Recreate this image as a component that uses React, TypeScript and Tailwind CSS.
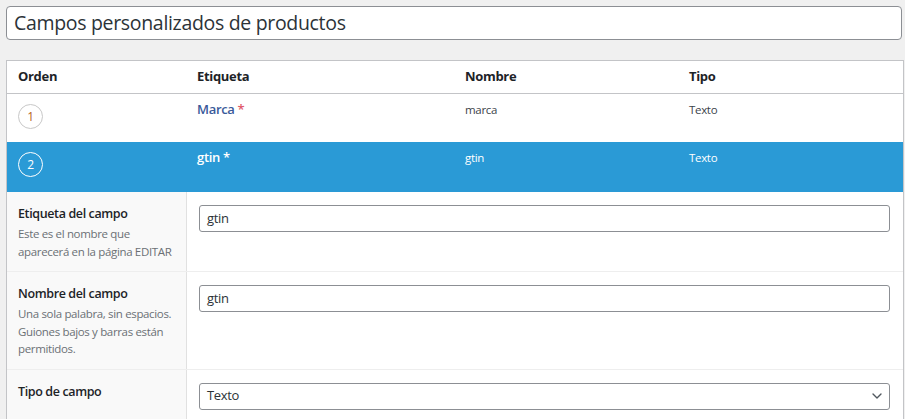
import { ChevronDown } from 'lucide-react';

interface Campo {
    orden: number;
    etiqueta: string;
    nombre: string;
    tipo: string;
}

const campos: Campo[] = [
    { orden: 1, etiqueta: 'Marca', nombre: 'marca', tipo: 'Texto' },
    { orden: 2, etiqueta: 'gtin', nombre: 'gtin', tipo: 'Texto' },
];

const FieldRow = ({
    label,
    desc,
    children,
    last,
}: {
    label: string;
    desc?: string[];
    children: React.ReactNode;
    last?: boolean;
}) => (
    <div className={`flex ${last ? 'min-h-[56px]' : 'border-b border-[#eeeeee]'}`}>
        <div className="w-[180px] shrink-0 border-r border-[#e1e1e1] bg-[#f9f9f9] px-[11px] pt-[13px] pb-[11px]">
            <p className="text-[12.5px] font-semibold leading-[18px] tracking-[-0.03em] text-[#1d2327]">
                {label}
            </p>
            {desc && (
                <div className="mt-[2px] text-[11.5px] leading-[17.5px] tracking-[-0.03em] whitespace-nowrap text-[#6b7075]">
                    {desc.map((d) => (
                        <p key={d}>{d}</p>
                    ))}
                </div>
            )}
        </div>
        <div className="flex-1 pt-[13px] pr-[13px] pl-[12px]">{children}</div>
    </div>
);

export default function App() {
    return (
        <div className="bg-[#f0f0f0] pt-[6px] pr-[1px] pl-[6px] font-['Open_Sans',sans-serif] tracking-[-0.02em]">
            <div className="mr-[2px] flex h-[34px] items-center rounded-[4px] border border-[#8c8f94] bg-white px-[7px] text-[19.5px] text-[#2c3338]">
                Campos personalizados de productos
            </div>

            <div className="mt-[20px] border border-[#c3c4c7] bg-white">
                {/* cabecera */}
                <div className="flex h-[33px] items-center border-b border-[#c3c4c7] text-[13px] font-bold text-[#1d2327]">
                    <div className="w-[190px] pl-[11px]">Orden</div>
                    <div className="w-[268px]">Etiqueta</div>
                    <div className="w-[224px]">Nombre</div>
                    <div>Tipo</div>
                </div>

                {campos.map((c) => {
                    const activo = c.orden === 2;
                    return (
                        <div
                            key={c.orden}
                            className={`flex h-[48px] ${activo ? 'bg-[#2a9ad6] text-white' : 'bg-white'}`}
                        >
                            <div className="w-[190px] pt-[10px] pl-[11px]">
                                <span
                                    className={`flex h-[25px] w-[25px] items-center justify-center rounded-full border text-[12px] ${
                                        activo
                                            ? 'border-white text-white'
                                            : 'border-[#c8c8c8] text-[#b5651d]'
                                    }`}
                                >
                                    {c.orden}
                                </span>
                            </div>
                            <div className="w-[268px] pt-[6px] text-[13px] font-semibold">
                                <span className={activo ? 'text-white' : 'text-[#3a5a9a]'}>
                                    {c.etiqueta}
                                </span>{' '}
                                <span className={activo ? 'text-white' : 'text-[#e05a6a]'}>
                                    *
                                </span>
                            </div>
                            <div
                                className={`w-[224px] pt-[7px] text-[11.5px] ${activo ? 'text-white' : 'text-[#3c434a]'}`}
                            >
                                {c.nombre}
                            </div>
                            <div
                                className={`pt-[7px] text-[11.5px] ${activo ? 'text-white' : 'text-[#3c434a]'}`}
                            >
                                {c.tipo}
                            </div>
                        </div>
                    );
                })}

                <div className="border-t-2 border-[#2a9ad6]">
                    <FieldRow
                        label="Etiqueta del campo"
                        desc={['Este es el nombre que', 'aparecerá en la página EDITAR']}
                    >
                        <div className="flex h-[27px] items-center rounded-[3px] border border-[#8c8f94] bg-white px-[7px] text-[13px] text-[#2c3338]">
                            gtin
                        </div>
                    </FieldRow>
                    <FieldRow
                        label="Nombre del campo"
                        desc={[
                            'Una sola palabra, sin espacios.',
                            'Guiones bajos y barras están',
                            'permitidos.',
                        ]}
                    >
                        <div className="flex h-[27px] items-center rounded-[3px] border border-[#8c8f94] bg-white px-[7px] text-[13px] text-[#2c3338]">
                            gtin
                        </div>
                    </FieldRow>
                    <FieldRow label="Tipo de campo" last>
                        <div className="flex h-[27px] items-center justify-between rounded-[3px] border border-[#8c8f94] bg-white pr-[4px] pl-[7px] text-[13px] text-[#2c3338]">
                            <span>Texto</span>
                            <ChevronDown size={16} strokeWidth={2} className="text-[#50575e]" />
                        </div>
                    </FieldRow>
                </div>
            </div>
        </div>
    );
}
